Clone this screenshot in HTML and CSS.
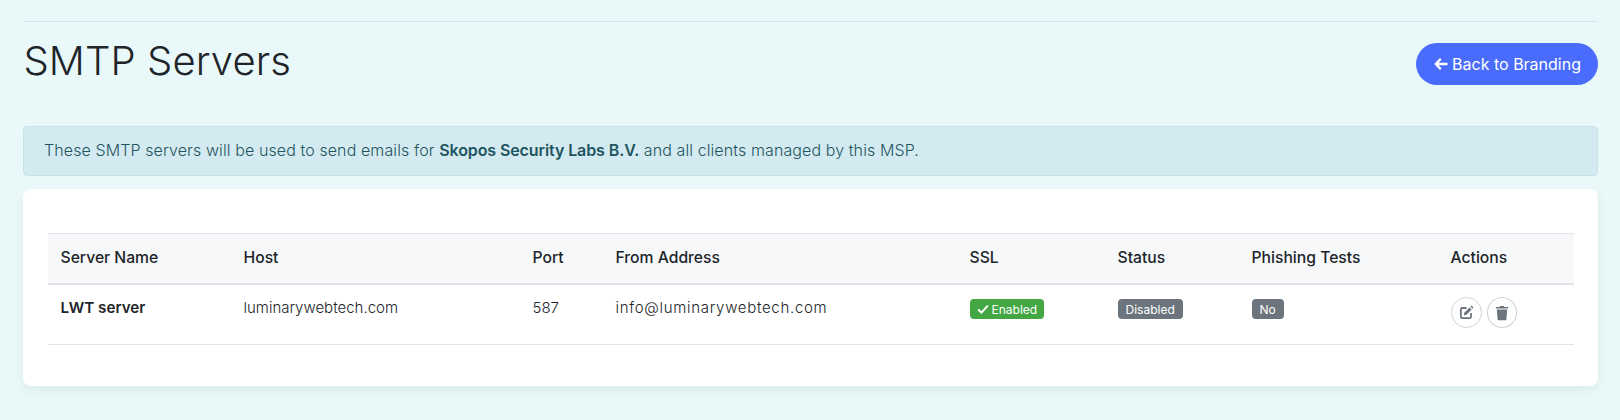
FILE: index.html
```html
<!DOCTYPE html>
<html lang="en">
<head>
    <meta charset="UTF-8">
    <meta name="viewport" content="width=device-width, initial-scale=1.0">
    <title>SMTP Servers</title>
    <link rel="stylesheet" href="styles.css">
</head>
<body>
    <hr class="topRule">

    <div class="pageHeader">
        <h1 class="pageTitle">SMTP Servers</h1>
        <a class="backButton" href="#">
            <svg class="backIcon" viewBox="0 0 16 16" width="16" height="16"><path d="M14.5 8H3M7.8 2.8 2.8 8l5 5.2" fill="none" stroke="currentColor" stroke-width="2.3"/></svg>
            Back to Branding
        </a>
    </div>

    <div class="infoAlert">
        These SMTP servers will be used to send emails for <strong>Skopos Security Labs B.V.</strong> and all clients managed by this MSP.
    </div>

    <div class="serverCard">
        <table class="serverTable">
            <colgroup>
                <col class="colName">
                <col class="colHost">
                <col class="colPort">
                <col class="colFrom">
                <col class="colSsl">
                <col class="colStatus">
                <col class="colPhishing">
                <col class="colActions">
            </colgroup>
            <thead>
                <tr>
                    <th>Server Name</th>
                    <th>Host</th>
                    <th>Port</th>
                    <th>From Address</th>
                    <th>SSL</th>
                    <th>Status</th>
                    <th>Phishing Tests</th>
                    <th>Actions</th>
                </tr>
            </thead>
            <tbody>
                <tr>
                    <td class="serverName">LWT server</td>
                    <td>luminarywebtech.com</td>
                    <td>587</td>
                    <td class="fromAddress">info@luminarywebtech.com</td>
                    <td>
                        <span class="badge badgeGreen">
                            <svg viewBox="0 0 12 12" width="12" height="12"><path d="M1.2 6.4 4.4 9.6 10.8 2.6" fill="none" stroke="currentColor" stroke-width="2.1"/></svg>
                            Enabled
                        </span>
                    </td>
                    <td><span class="badge badgeGrey">Disabled</span></td>
                    <td><span class="badge badgeGrey">No</span></td>
                    <td>
                        <div class="actionButtons">
                            <button class="iconButton" type="button" aria-label="Edit">
                                <svg viewBox="0 0 16 16" width="15" height="15"><path d="M8 3.2H3.4A1.4 1.4 0 0 0 2 4.6v8A1.4 1.4 0 0 0 3.4 14h8a1.4 1.4 0 0 0 1.4-1.4V8.5" fill="none" stroke="currentColor" stroke-width="1.9"/><path d="M5.6 8.2 11.2 2.6l2.3 2.3-5.6 5.6-2.8.5zM12.2 1.7l.6-.6a.8.8 0 0 1 1.1 0l1.1 1.1a.8.8 0 0 1 0 1.1l-.6.6z" fill="currentColor"/></svg>
                            </button>
                            <button class="iconButton trashButton" type="button" aria-label="Delete">
                                <svg viewBox="0 0 14 16" width="14" height="16"><path d="M.8 2h3.8L5.2 1h3.6l.6 1h3.8v1.6H.8zM1.8 4.4h10.4l-.8 10a1 1 0 0 1-1 .9H3.6a1 1 0 0 1-1-.9z" fill="currentColor"/></svg>
                            </button>
                        </div>
                    </td>
                </tr>
            </tbody>
        </table>
    </div>
</body>
</html>
```

FILE: styles.css
```css
* {
    box-sizing: border-box;
}

body {
    margin: 0;
    padding: 21px 22px 0 23px;
    height: 420px;
    overflow: hidden;
    background-color: #e9f9fa;
    font-family: "Inter", "Liberation Sans", sans-serif;
    font-size: 15px;
    font-weight: 300;
    color: #212529;
}

.topRule {
    margin: 0;
    border: 0;
    border-top: 1px solid #d3e5e8;
}

.pageHeader {
    display: flex;
    justify-content: space-between;
    align-items: flex-start;
    padding-top: 15px;
    height: 104px;
}

.pageTitle {
    margin: 0 0 0 0.5px;
    font-size: 40px;
    line-height: 48px;
    font-weight: 300;
    letter-spacing: 0.1px;
}

.backButton {
    display: flex;
    align-items: center;
    gap: 3px;
    height: 42px;
    margin-top: 6px;
    padding: 0 17px;
    border-radius: 21px;
    background-color: #4a6cfc;
    color: #fff;
    font-size: 16px;
    font-weight: 400;
    text-decoration: none;
}

.infoAlert {
    height: 50px;
    padding: 0 20px;
    line-height: 46px;
    border: 1px solid #c5e4ea;
    border-radius: 4px;
    background-color: #d3eaf0;
    color: #1f5560;
    font-size: 16px;
    letter-spacing: 0.1px;
}

.infoAlert strong {
    font-weight: 600;
    letter-spacing: -0.1px;
}

.serverCard {
    height: 197px;
    margin-top: 13px;
    padding: 44px 24px 0 24.5px;
    border-radius: 8px;
    background-color: #fff;
    box-shadow: 0 4px 12px rgba(0, 0, 0, 0.06);
}

.serverTable {
    width: 100%;
    table-layout: fixed;
    border-collapse: collapse;
}

.colName { width: 183px; }
.colHost { width: 289px; }
.colPort { width: 83px; }
.colFrom { width: 354px; }
.colSsl { width: 148px; }
.colStatus { width: 134px; }
.colPhishing { width: 199px; }

.serverTable th {
    height: 50px;
    padding: 0 13px 1px;
    border-top: 1px solid #e0e3e9;
    border-bottom: 2px solid #e0e3e9;
    background-color: #f6f8fa;
    text-align: left;
    font-size: 15.7px;
    font-weight: 500;
}

.serverTable td {
    height: 61px;
    padding: 0 13px 13px;
    border-bottom: 1px solid #e0e3e9;
}

.serverTable .serverName {
    font-size: 15.2px;
    font-weight: 600;
}

.serverTable .fromAddress {
    letter-spacing: 0.7px;
}

.badge {
    display: inline-flex;
    align-items: center;
    gap: 3px;
    height: 20px;
    margin-top: 3px;
    padding: 0 8px;
    border-radius: 4px;
    color: #fff;
    font-size: 12px;
    font-weight: 400;
}

.badgeGreen {
    padding: 0 7px;
    background-color: #43a843;
}

.badgeGrey {
    background-color: #6c757d;
}

.actionButtons {
    display: flex;
    gap: 5px;
    margin-top: 10px;
}

.iconButton {
    display: flex;
    align-items: center;
    justify-content: center;
    width: 31px;
    height: 31px;
    padding: 0;
    border: 1px solid #ccd3db;
    border-radius: 50%;
    background-color: #fff;
    color: #6c757d;
}

.trashButton {
    width: 30px;
}
```
